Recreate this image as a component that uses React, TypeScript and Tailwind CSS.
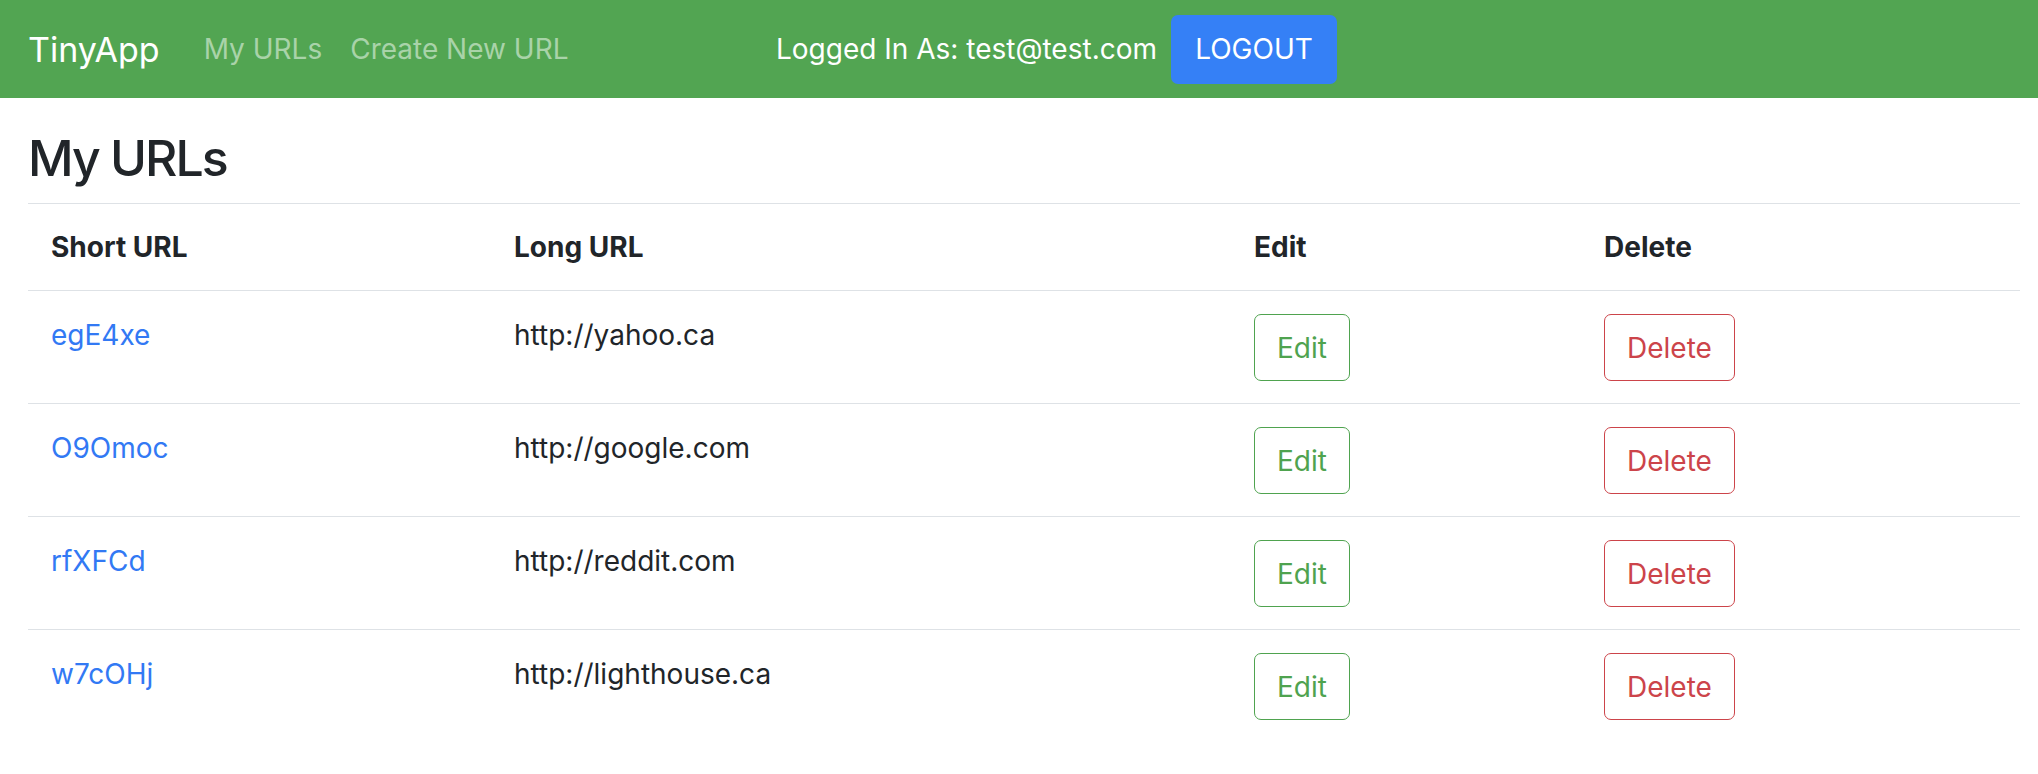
import React from "react";

const URLS = [
  { short: "egE4xe", long: "http://yahoo.ca" },
  { short: "O9Omoc", long: "http://google.com" },
  { short: "rfXFCd", long: "http://reddit.com" },
  { short: "w7cOHj", long: "http://lighthouse.ca" },
];

function NavBar() {
  return (
    <nav className="flex h-[98px] items-center bg-[#52a552] px-[28px]">
      <div className="flex w-[748px] items-center">
        <span className="text-[34px] leading-[51px] text-white">TinyApp</span>
        <a className="ml-[30px] px-[14px] text-[28px] text-[#a9d3a9]" href="#">
          My URLs
        </a>
        <a className="px-[14px] text-[28px] text-[#a9d3a9]" href="#">
          Create New URL
        </a>
      </div>
      <span className="text-[28px] text-white">Logged In As: test@test.com</span>
      <button className="ml-[14px] flex h-[69px] w-[166px] items-center justify-center rounded-[7px] bg-[#3580f6] text-[28px] text-white">
        LOGOUT
      </button>
    </nav>
  );
}

export default function App() {
  return (
    <div className="min-h-screen bg-white font-['Inter',sans-serif] text-[#212529]">
      <NavBar />

      <main className="pl-[28px] pr-[18px] pt-[30px]">
        <h1 className="mb-[15px] text-[50px] font-medium leading-[60px] tracking-[-2px]">My URLs</h1>

        <table className="w-full border-collapse text-left text-[28px] leading-[42px]">
          <colgroup>
            <col className="w-[463px]" />
            <col className="w-[740px]" />
            <col className="w-[350px]" />
            <col />
          </colgroup>
          <thead>
            <tr className="border-y border-[#dee2e6]">
              <th className="px-[23px] py-[22px] font-bold">Short URL</th>
              <th className="px-[23px] py-[22px] font-bold">Long URL</th>
              <th className="px-[23px] py-[22px] font-bold">Edit</th>
              <th className="px-[23px] py-[22px] font-bold">Delete</th>
            </tr>
          </thead>
          <tbody>
            {URLS.map((url, i) => (
              <tr
                key={url.short}
                className={i < URLS.length - 1 ? "border-b border-[#dee2e6]" : ""}
              >
                <td className="px-[23px] pt-[23px] pb-[22px] align-top">
                  <a href="#" className="text-[#3279f4]">
                    {url.short}
                  </a>
                </td>
                <td className="px-[23px] pt-[23px] pb-[22px] align-top">{url.long}</td>
                <td className="px-[23px] pt-[23px] pb-[22px] align-top">
                  <button className="flex h-[67px] items-center rounded-[7px] border-[1.5px] border-[#4fa34f] px-[22px] text-[#4fa34f]">
                    Edit
                  </button>
                </td>
                <td className="px-[23px] pt-[23px] pb-[22px] align-top">
                  <button className="flex h-[67px] items-center rounded-[7px] border-[1.5px] border-[#cc444a] px-[22px] text-[#cc444a]">
                    Delete
                  </button>
                </td>
              </tr>
            ))}
          </tbody>
        </table>
      </main>
    </div>
  );
}
